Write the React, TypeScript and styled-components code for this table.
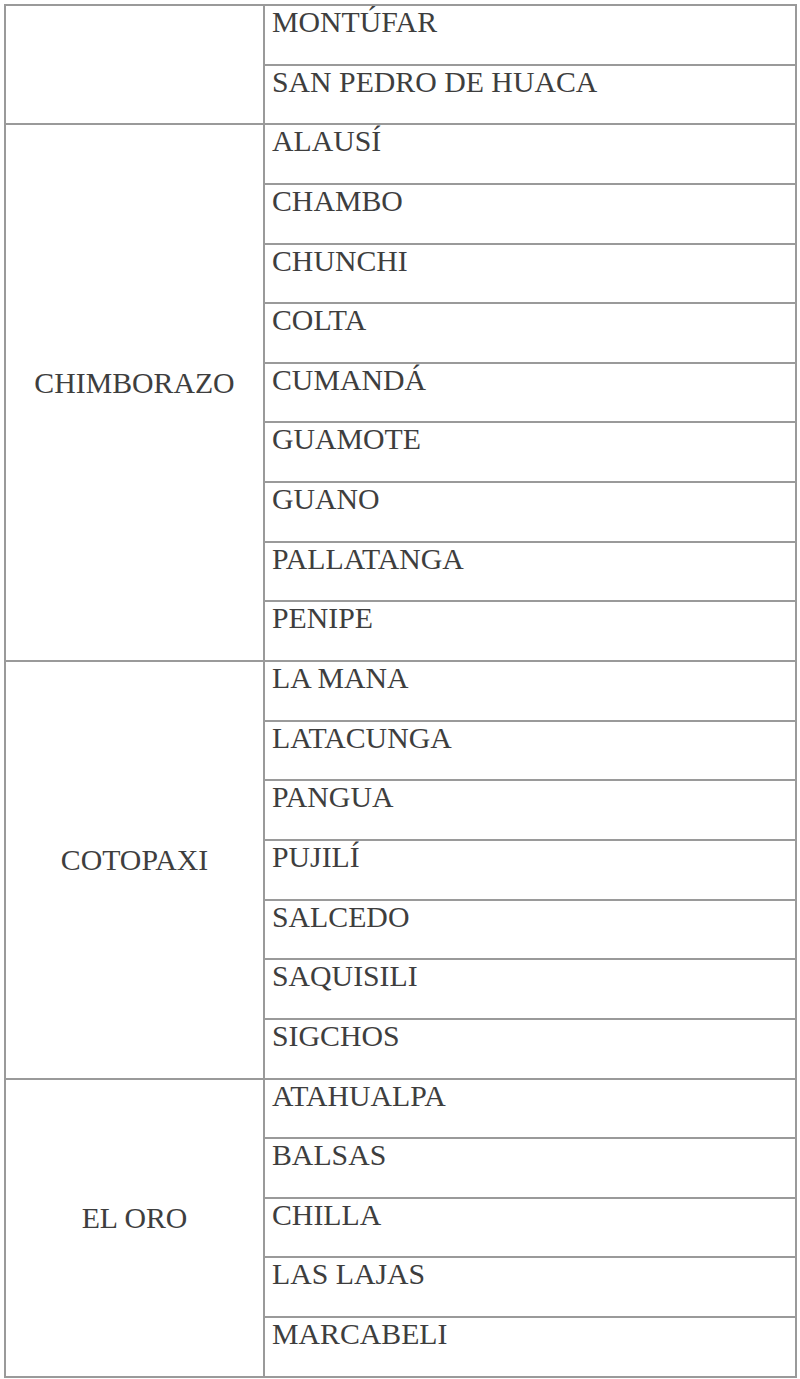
import styled, { createGlobalStyle } from 'styled-components';

const GlobalStyle = createGlobalStyle`
  html, body {
    margin: 0;
    padding: 0;
    background: #fff;
  }
`;

const Page = styled.div`
  padding: 4px 3px 0 4px;
  width: 800px;
  box-sizing: border-box;
`;

const Table = styled.table`
  width: 793px;
  border-collapse: collapse;
  table-layout: fixed;
  font-family: 'Liberation Serif', 'Times New Roman', serif;
  font-size: 29.8px;
  line-height: 32px;
  color: #3e3e3e;
`;

const Row = styled.tr`
  height: 59.65px;
`;

const ProvinceCell = styled.td`
  width: 257px;
  border: 2px solid #9a9a9a;
  text-align: center;
  vertical-align: middle;
  padding: 0 0 20px 0;
`;

const CantonCell = styled.td`
  border: 2px solid #9a9a9a;
  vertical-align: top;
  padding: 0 8px 0 7px;
  white-space: nowrap;
`;

// provincia -> cantones, as the page lists them
const groups: { province: string; cantons: string[] }[] = [
  { province: '', cantons: ['MONTÚFAR', 'SAN PEDRO DE HUACA'] },
  {
    province: 'CHIMBORAZO',
    cantons: [
      'ALAUSÍ',
      'CHAMBO',
      'CHUNCHI',
      'COLTA',
      'CUMANDÁ',
      'GUAMOTE',
      'GUANO',
      'PALLATANGA',
      'PENIPE',
    ],
  },
  {
    province: 'COTOPAXI',
    cantons: ['LA MANA', 'LATACUNGA', 'PANGUA', 'PUJILÍ', 'SALCEDO', 'SAQUISILI', 'SIGCHOS'],
  },
  { province: 'EL ORO', cantons: ['ATAHUALPA', 'BALSAS', 'CHILLA', 'LAS LAJAS', 'MARCABELI'] },
];

export default function App() {
  return (
    <Page>
      <GlobalStyle />
      <Table>
        <tbody>
          {groups.map((g) =>
            g.cantons.map((c, i) => (
              <Row key={g.province + c}>
                {i === 0 && <ProvinceCell rowSpan={g.cantons.length}>{g.province}</ProvinceCell>}
                <CantonCell>{c}</CantonCell>
              </Row>
            ))
          )}
        </tbody>
      </Table>
    </Page>
  );
}
